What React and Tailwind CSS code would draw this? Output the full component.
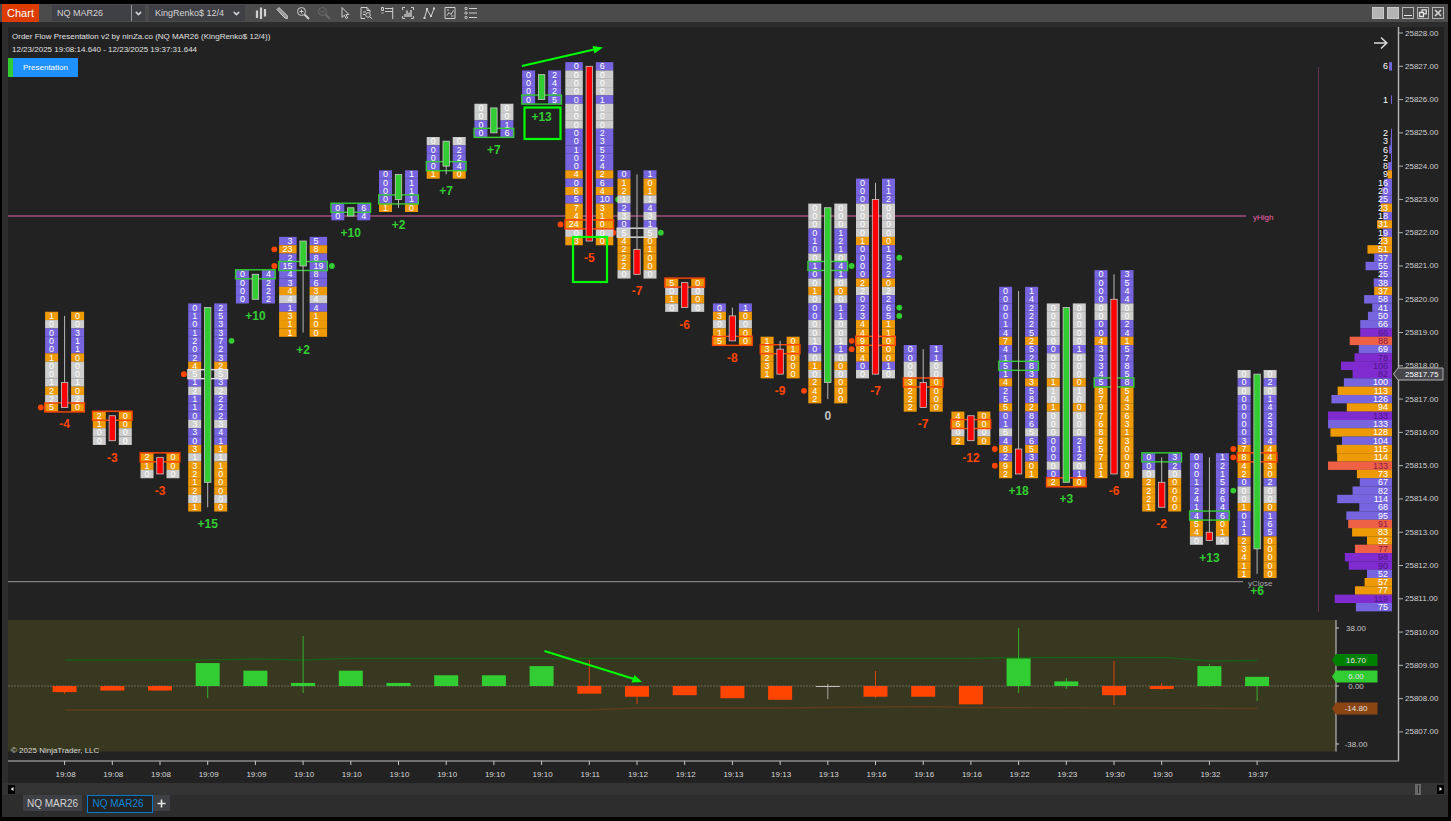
import { ChevronDown, X } from 'lucide-react'

// price ladder: tick 0 is 25827.00, every tick is 0.25 lower
const TICK = 8.32
const tickY = (t) => 66.3 + t * TICK
const barX = (i) => 64.6 + i * 47.7
const deltaY = (v) => 686 - v * 1.53

const GREEN = '#32cd32'
const RED = '#ff4500'
const WHITE = '#e0e0e0'

// top: first tick, bid / ask: one entry per tick, body / wick: tick ranges, box: highlighted tick
// dots: [side, tick, color], osc: delta wick in pixels
const CANDLES = [
  { time: '19:08', delta: -4, top: 30, bid: '1 0 0 0 0 1 0 0 1 2 2 5', ask: '0 0 3 1 1 0 0 0 1 0 2 0', body: [38, 41], wick: [30, 41], box: [41, RED], dots: [[-1, 41, RED]], osc: [686, 694] },
  { time: '19:08', delta: -3, top: 42, bid: '2 1 0 0', ask: '0 0 0 0', body: [42, 45], box: [42, RED] },
  { time: '19:08', delta: -3, top: 47, bid: '2 1 0', ask: '0 0 0', body: [47, 49], box: [47, RED] },
  { time: '19:09', delta: 15, top: 29, bid: '0 1 0 1 2 0 2 4 5 1 2 1 1 0 3 3 0 3 1 3 2 1 2 0 1', ask: '2 5 3 3 7 2 3 2 5 3 2 2 2 2 3 4 1 1 1 1 0 0 0 0 0', body: [29, 50], wick: [29, 53], box: [37, WHITE], dots: [[-1, 37, RED], [1, 33, GREEN]], osc: [686, 698] },
  { time: '19:09', delta: 10, top: 25, bid: '0 0 0 0', ask: '4 2 2 2', body: [25, 28], box: [25, GREEN] },
  { time: '19:10', delta: 2, wide: true, top: 21, bid: '3 23 2 15 4 3 4 4 1 3 1 1', ask: '5 8 8 19 8 6 3 4 4 1 0 0', body: [21, 24], wick: [21, 32], box: [24, GREEN], dots: [[-1, 22, RED], [-1, 24, RED], [1, 24, GREEN]], osc: [636, 693] },
  { time: '19:10', delta: 10, top: 17, bid: '0 0', ask: '6 4', body: [17, 18], box: [17, GREEN] },
  { time: '19:10', delta: 2, top: 13, bid: '0 0 0 0 1', ask: '1 1 1 1 0', body: [13, 16], wick: [13, 17], box: [16, GREEN] },
  { time: '19:10', delta: 7, top: 9, bid: '0 0 0 0 1', ask: '0 2 2 4 0', body: [9, 12], wick: [9, 13], box: [12, GREEN] },
  { time: '19:10', delta: 7, top: 5, bid: '0 0 0 0', ask: '0 0 1 6', body: [5, 8], box: [8, GREEN] },
  { time: '19:10', delta: 13, top: 1, bid: '0 0 0 0', ask: '2 4 2 5', body: [1, 4], box: [4, GREEN] },
  { time: '19:11', delta: -5, wide: true, top: 0, bid: '0 0 0 0 0 0 0 0 0 0 1 0 0 4 0 6 5 7 4 24 0 3', ask: '6 0 0 0 1 0 0 0 2 3 5 2 4 2 6 4 10 3 1 0 0 0', body: [0, 21], box: [19, RED], dots: [[-1, 19, RED], [1, 16, GREEN]], osc: [660, 686] },
  { time: '19:12', delta: -7, top: 13, bid: '0 1 2 1 2 3 0 5 4 2 2 2 0', ask: '1 0 1 1 4 3 1 5 0 1 0 0 0', body: [22, 25], wick: [13, 25], box: [20, WHITE], dots: [[-1, 20, RED], [1, 20, GREEN]], osc: [686, 704] },
  { time: '19:12', delta: -6, top: 26, bid: '5 0 1 0', ask: '0 0 0 0', body: [26, 29], box: [26, RED] },
  { time: '19:13', delta: -8, top: 29, bid: '0 3 0 1 5', ask: '1 0 0 0 0', body: [30, 33], wick: [29, 33], box: [33, RED] },
  { time: '19:13', delta: -9, top: 33, bid: '1 3 2 3 1', ask: '0 1 0 0 0', body: [34, 37], wick: [33, 37], box: [34, RED] },
  { time: '19:13', delta: 0, top: 17, bid: '0 0 0 0 1 0 0 1 0 0 1 0 0 0 0 0 1 0 0 1 0 2 4 2', ask: '0 0 0 1 2 1 0 4 1 0 0 0 1 1 0 0 1 1 0 0 0 0 0 0', body: [17, 38], wick: [17, 40], box: [24, GREEN], dots: [[-1, 39, RED], [1, 24, GREEN]], osc: [684, 699] },
  { time: '19:16', delta: -7, top: 14, bid: '0 0 0 0 0 0 0 1 0 0 0 0 2 2 0 2 3 4 4 9 8 4 0 0', ask: '1 1 2 0 0 0 0 0 1 5 2 2 0 2 2 6 5 1 1 0 0 0 1 0', body: [16, 37], wick: [14, 37], box: [33, RED], dots: [[-1, 33, RED], [-1, 34, RED], [1, 23, GREEN], [1, 29, GREEN], [1, 30, GREEN]], osc: [671, 698] },
  { time: '19:16', delta: -7, top: 34, bid: '0 0 0 0 3 2 2 2', ask: '1 1 0 0 0 0 0 0', body: [38, 41], wick: [34, 41], box: [38, RED] },
  { time: '19:16', delta: -12, top: 42, bid: '4 6 0 2', ask: '0 0 0 0', body: [42, 45], box: [43, RED] },
  { time: '19:22', delta: 18, top: 27, bid: '0 0 0 0 1 4 7 4 1 5 1 4 2 5 5 0 1 5 4 8 2 9 2', ask: '1 4 2 2 2 5 2 5 2 8 3 3 5 8 2 8 6 5 6 5 3 0 1', body: [46, 49], wick: [27, 49], box: [36, GREEN], dots: [[-1, 46, RED], [-1, 48, RED]], osc: [628, 693] },
  { time: '19:23', delta: 3, top: 29, bid: '0 0 0 0 0 0 0 0 0 1 1 0 1 0 0 0 0 0 0 0 0 2', ask: '0 0 0 0 0 1 0 0 0 0 1 0 0 0 0 0 2 1 2 0 1 0', body: [29, 50], box: [50, RED], osc: [678, 689] },
  { time: '19:30', delta: -6, top: 25, bid: '0 0 0 0 0 0 0 0 4 3 3 3 4 5 8 7 9 7 6 8 6 5 7 1 1', ask: '3 5 4 4 0 0 2 4 1 5 7 8 5 8 5 4 3 6 3 1 3 0 0 0 0', body: [28, 49], wick: [25, 49], box: [38, GREEN], osc: [661, 705] },
  { time: '19:30', delta: -2, top: 47, bid: '0 0 0 2 2 2 1', ask: '3 2 0 0 0 0 0', body: [50, 53], wick: [47, 53], box: [47, GREEN], osc: [683, 690] },
  { time: '19:32', delta: 13, top: 47, bid: '0 0 0 1 2 4 1 4 5 4 0', ask: '1 2 1 5 8 6 4 6 0 1 0', body: [56, 57], wick: [47, 57], box: [54, GREEN], osc: [664, 687] },
  { time: '19:37', delta: 6, top: 37, bid: '0 0 0 0 0 0 0 0 3 7 8 4 2 0 0 0 1 0 1 1 2 3 4 1 1', ask: '0 2 0 1 4 2 3 3 4 4 4 3 0 2 0 0 0 1 6 5 0 0 0 0 0', body: [37, 58], wick: [37, 61], box: [47, RED], dots: [[-1, 46, RED], [-1, 47, RED], [-1, 51, GREEN]], osc: [686, 701] },
]

// candles that closed up
const UP = [3, 4, 5, 6, 7, 8, 9, 10, 16, 21, 25]

// volume profile from tick 8 down; the letter picks the bar color
const PROFILE =
  '2 3 6 2 8 9o 16 20 25 23o 18 31o 19 23o 51o 37 55 25 38 37o 58 41 50 66 66p 88r 69 78p 106p 82p 100 113o 126 94o 133p 133 128o 104 115o 114o 133r 73o 67 82 114 68 95 91r 83o 52o 77r 98p 90p 52 57o 77o 119p 75'
const VOLUME = [
  { tick: 0, value: 6, kind: 'v' },
  { tick: 4, value: 1, kind: 'v' },
  ...PROFILE.split(' ').map((s, i) => ({
    tick: 8 + i,
    value: parseInt(s, 10),
    kind: /[a-z]$/.test(s) ? s.slice(-1) : 'v',
  })),
]
const BAR_FILL = { v: '#7665df', o: '#ee9a06', p: '#802bd0', r: '#ef6145' }
const BAR_TEXT = { v: '#ffffff', o: '#ffffff', p: '#4c1688', r: '#8b1a4e' }

const cellFill = (bid, ask) => (bid > ask ? '#ee9a06' : ask > bid ? '#7665df' : '#cdcdcd')

function Footprint({ candle, index }) {
  const x = barX(index)
  const outer = candle.wide ? 24 : 19.5
  const width = candle.wide ? 17.5 : 13
  const bids = candle.bid.split(' ').map(Number)
  const asks = candle.ask.split(' ').map(Number)
  const last = candle.top + bids.length - 1
  const up = UP.includes(index)
  const labelColor = candle.delta > 0 ? GREEN : candle.delta < 0 ? RED : '#c0c0c0'
  return (
    <g>
      {bids.map((bid, r) => {
        const y = tickY(candle.top + r)
        const fill = cellFill(bid, asks[r])
        return (
          <g key={r}>
            <rect x={x - outer} y={y - TICK / 2} width={width} height={TICK + 0.1} fill={fill} />
            <rect x={x + outer - width} y={y - TICK / 2} width={width} height={TICK + 0.1} fill={fill} />
          </g>
        )
      })}
      <g className="fill-white text-[9px]" dominantBaseline="central">
        {bids.map((bid, r) => (
          <text key={r} x={x - 10.5} y={tickY(candle.top + r)} textAnchor="end">{bid}</text>
        ))}
        {asks.map((ask, r) => (
          <text key={r} x={x + 10.5} y={tickY(candle.top + r)}>{ask}</text>
        ))}
      </g>
      <rect x={x - outer - 0.3} y={tickY(candle.box[0]) - 4.5} width={outer * 2 + 0.6} height={9} fill="none" stroke={candle.box[1]} strokeWidth="1.4" />
      {candle.wick && (
        <line x1={x} x2={x} y1={tickY(candle.wick[0])} y2={tickY(candle.wick[1])} stroke="#b8b8b8" />
      )}
      <rect
        x={x - 3.2}
        y={tickY(candle.body[0])}
        width={6.4}
        height={(candle.body[1] - candle.body[0]) * TICK}
        fill={up ? GREEN : '#ff0000'}
        stroke="#c8c8c8"
        strokeWidth="0.8"
      />
      <text x={x} y={tickY(last) + 17} textAnchor="middle" dominantBaseline="central" className="text-[12px] font-bold" fill={labelColor}>
        {candle.delta > 0 ? `+${candle.delta}` : candle.delta}
      </text>
    </g>
  )
}

function DeltaPanel() {
  return (
    <g>
      <rect x="8" y="620" width="1328" height="131.5" fill="#38371f" />
      <line x1="8" x2="1336" y1="686" y2="686" stroke="#6c6b5a" strokeDasharray="2 1" />
      <polyline points="65,660 208,660 255,659 302,660 350,658.5 970,658.5 1019,657.5 1165,657.5 1209,661 1257,660.5" fill="none" stroke="#1d5c16" strokeWidth="1.4" />
      <polyline points="65,710 590,710 637,708 780,708 924,706.5 971,707.5 1257,708.5" fill="none" stroke="#5f3c1b" strokeWidth="1.4" />
      {CANDLES.map((c, i) => {
        const x = barX(i)
        const color = c.delta > 0 ? GREEN : c.delta < 0 ? RED : '#c0c0c0'
        const y = Math.min(deltaY(c.delta), 686)
        return (
          <g key={i}>
            {c.osc && <line x1={x} x2={x} y1={c.osc[0]} y2={c.osc[1]} stroke={color} strokeOpacity="0.8" />}
            <rect x={x - 12} y={y} width="24" height={Math.max(Math.abs(deltaY(c.delta) - 686), 1)} fill={color} />
          </g>
        )
      })}
      <line x1="1336" x2="1336" y1="620" y2="751.5" stroke="#d0d0d0" />
      {[['38.00', 628], ['0.00', 686], ['-38.00', 744]].map(([label, y]) => (
        <g key={label}>
          <line x1="1336" x2="1339" y1={y} y2={y} stroke="#d0d0d0" />
          <text x="1356" y={y} textAnchor="middle" dominantBaseline="central" className="fill-[#c8c8c8] text-[8px]">{label}</text>
        </g>
      ))}
      {[['16.70', 660, '#008000'], ['6.00', 676.5, '#32cd32'], ['-14.80', 708.5, '#8b4513']].map(([label, y, fill]) => (
        <g key={label}>
          <path d={`M1332 ${y} L1336 ${y - 6} H1377.5 V${y + 6} H1336 Z`} fill={fill} />
          <text x="1356" y={y} textAnchor="middle" dominantBaseline="central" className="fill-[#e0e0e0] text-[8px]">{label}</text>
        </g>
      ))}
    </g>
  )
}

function PriceAxis() {
  const prices = Array.from({ length: 22 }, (_, i) => 25828 - i)
  return (
    <g>
      <line x1="1398.5" x2="1398.5" y1="27" y2="761" stroke="#b8b8b8" strokeWidth="1.4" />
      {prices.map((p, i) => (
        <g key={p}>
          <line x1="1399" x2="1403" y1={tickY(i * 4 - 4)} y2={tickY(i * 4 - 4)} stroke="#b0b0b0" />
          <text x="1405" y={tickY(i * 4 - 4)} dominantBaseline="central" className="fill-[#d0d0d0] text-[8px]">{p}.00</text>
        </g>
      ))}
      <path d="M1393.5 374 L1398 368 H1443 V380 H1398 Z" fill="#47474b" stroke="#b4b4b4" />
      <text x="1405" y="374.2" dominantBaseline="central" className="fill-white text-[8px]">25817.75</text>
    </g>
  )
}

function TimeAxis() {
  return (
    <g>
      <line x1="8" x2="1399" y1="761" y2="761" stroke="#8c8c8c" strokeWidth="1.4" />
      {CANDLES.map((c, i) => (
        <g key={i}>
          <line x1={barX(i)} x2={barX(i)} y1="761" y2="765" stroke="#c8c8c8" />
          <text x={barX(i) + 1} y="774" textAnchor="middle" dominantBaseline="central" className="fill-[#d8d8d8] text-[8px]">{c.time}</text>
        </g>
      ))}
    </g>
  )
}

function VolumeProfile() {
  return (
    <g>
      {VOLUME.map((v) => {
        const w = Math.max(v.value * 0.481, 1)
        return <rect key={v.tick} x={1392 - w} y={tickY(v.tick) - TICK / 2} width={w} height={TICK + 0.1} fill={BAR_FILL[v.kind]} />
      })}
      {VOLUME.map((v) => (
        <text key={v.tick} x="1388" y={tickY(v.tick)} textAnchor="end" dominantBaseline="central" fill={BAR_TEXT[v.kind]} className="text-[9px]">{v.value}</text>
      ))}
    </g>
  )
}

function Chart() {
  return (
    <svg viewBox="8 27 1436 756" className="block h-auto w-full bg-[#222222]" role="img" aria-label="Order flow chart">
      <line x1="8" x2="1246" y1="216" y2="216" stroke="#a04f7b" strokeWidth="1.4" />
      <text x="1253" y="217" dominantBaseline="central" className="fill-[#f065ad] text-[8px]">yHigh</text>
      <line x1="8" x2="1243" y1="581.7" y2="581.7" stroke="#9a9a9a" />
      <line x1="1318.5" x2="1318.5" y1="67" y2="612" stroke="#663351" />

      {CANDLES.map((c, i) =>
        (c.dots || []).map(([side, tick, color]) => (
          <circle key={`${i}-${side}-${tick}`} cx={barX(i) + side * (c.wide ? 28.8 : 23.8)} cy={tickY(tick)} r="2.9" fill={color} />
        ))
      )}
      {CANDLES.map((c, i) => <Footprint key={i} candle={c} index={i} />)}
      <text x="1248" y="583" dominantBaseline="central" className="fill-[#a8a8a8] text-[8px]">yClose</text>

      <VolumeProfile />
      <DeltaPanel />
      <PriceAxis />
      <TimeAxis />

      {/* annotations */}
      <g fill="none" stroke="#00ff00" strokeWidth="2.2">
        <rect x="524.5" y="107.5" width="36" height="31.5" />
        <rect x="573" y="237" width="34" height="45" />
        <path d="M522 66 L594 49.5" />
        <path d="M544.5 651 L634 679" />
      </g>
      <path d="M603 47.5 L592.5 46 L594.5 53.5 Z M642 682 L634.5 675 L631.5 682.5 Z" fill="#00ff00" />

      <path d="M1374 43 H1386.5 M1381 37.5 L1386.8 43 L1381 48.5" fill="none" stroke="#d8d8d8" strokeWidth="1.6" />
    </svg>
  )
}

const TOOLS = [
  { label: 'Chart style', art: <g strokeWidth="2.2"><path d="M3 4.5v7.5M7 1.5v11.5M11 3v7.5" /></g> },
  { label: 'Drawing tools', art: <><path d="M2 3.5 L4 1.5 L12 9.5 L12.5 12.5 L9.8 12 Z" fill="currentColor" fillOpacity="0.6" /></> },
  { label: 'Zoom in', art: <><circle cx="5.5" cy="5.5" r="4" /><path d="M3.5 5.5h4M5.5 3.5v4" /><path d="M8.5 8.5l4.5 4.5" strokeWidth="2" /></> },
  { label: 'Zoom out', dim: true, art: <><circle cx="5.5" cy="5.5" r="4" /><path d="M3.5 5.5h4" /><path d="M8.5 8.5l4.5 4.5" strokeWidth="2" /></> },
  { label: 'Cursor', art: <path d="M4 1.5v10l2.4-2.3 1.8 3.5 1.5-.8-1.8-3.3H11Z" /> },
  { label: 'Data series', art: <><path d="M6 12.5H2V1.5h6l3 3v2M8 1.5v3h3M4 6h3M4 8.5h2" /><circle cx="9" cy="9" r="2.3" /><path d="M10.8 10.8l2.4 2" /></> },
  { label: 'Chart trader', art: <><path d="M1.5 1.5h2v3h-2zM1.5 7h2M5 2.5h8M12.7 1.5v11.5M5 5.5h7.5" /></> },
  { label: 'Indicators', art: <><path d="M1.5 4V1.5H4M10 1.5h2.5V4M1.5 10v2.5H4M10 12.5h2.5V10" /><path d="M4 11V8M6 11V4.5M8 11V6.5M10 11V4" strokeWidth="1.4" /></> },
  { label: 'Strategies', art: <><path d="M2.5 11.5L5 3.5l4 7 3-8" /><path d="M1.5 11h2v2h-2zM4 2h2v2H4zM8 9h2v2H8zM11 1.5h2v2h-2z" fill="currentColor" stroke="none" /></> },
  { label: 'Snapshot', art: <><path d="M2 1.5h10v11H2z" /><path d="M4 9.5l2-3 2 2 2.5-4M4 4h2M8 10h2.5" /></> },
  { label: 'Properties', art: <><path d="M5 2.5h8M5 7h8M5 11.5h8" /><path d="M1 1.5h2v2H1zM1 6h2v2H1zM1 10.5h2v2H1z" strokeWidth="0.8" /></> },
]

function Toolbar() {
  return (
    <header className="flex h-[18px] items-center bg-[#4b4b4b] pr-1 pl-[2px] text-[#d4d4d4]">
      <div className="flex h-full w-[37px] items-center justify-center bg-[#dc3c00] text-[11px] text-white">Chart</div>
      <div className="relative ml-[13px] h-4 w-[93px] bg-[#3f3f46]">
        <select aria-label="Instrument" className="block h-full w-full appearance-none pl-[5px] text-[9px] leading-4 outline-none">
          <option>NQ MAR26</option>
        </select>
        <div className="pointer-events-none absolute inset-y-0 right-0 flex w-[14px] items-center justify-center border-l border-[#999999]">
          <ChevronDown size={9} strokeWidth={4} />
        </div>
      </div>
      <div className="relative ml-1 h-4 w-[96px] bg-[#3f3f46]">
        <select aria-label="Interval" className="block h-full w-full appearance-none pl-[6px] text-[9px] leading-4 outline-none">
          <option>KingRenko$ 12/4</option>
        </select>
        <ChevronDown size={9} strokeWidth={4} className="pointer-events-none absolute top-1 right-1" />
      </div>
      <div className="ml-[9px] flex items-center gap-[7px]">
        {TOOLS.map((t) => (
          <button key={t.label} aria-label={t.label} className={t.dim ? 'text-[#6a6a6a]' : 'text-[#cfcfcf]'}>
            <svg viewBox="0 0 14 14" width="14" height="14" fill="none" stroke="currentColor">{t.art}</svg>
          </button>
        ))}
      </div>
      <div className="ml-auto flex items-center gap-[3px]">
        <button aria-label="Link instrument" className="h-3 w-3 border border-[#c8c8c8] bg-[#b4b4b4]" />
        <button aria-label="Link interval" className="h-3 w-3 border border-[#c8c8c8] bg-[#b4b4b4]" />
        <button aria-label="Minimize" className="flex h-3 w-3 items-end justify-center border border-[#b4b4b4] pb-[2px]">
          <span className="h-px w-2 bg-[#e4e4e4]" />
        </button>
        <button aria-label="Restore" className="flex h-3 w-3 items-center justify-center border border-[#b4b4b4]">
          <svg viewBox="0 0 10 10" width="10" height="10" fill="none" stroke="#e4e4e4" strokeWidth="1.3">
            <path d="M1.5 4.5h4v4h-4zM4 4.5V1.8h4.2v4H5.5" />
          </svg>
        </button>
        <button aria-label="Close" className="flex h-3 w-3 items-center justify-center border border-[#b4b4b4]">
          <X size={10} strokeWidth={4} />
        </button>
      </div>
    </header>
  )
}

export default function App() {
  return (
    <div className="min-h-screen bg-black pt-1 pr-[3px] pb-1 font-['Liberation_Sans',Arial,sans-serif]">
      <Toolbar />
      <div className="border-l-2 border-black bg-[#2d2d2e]">
        <main className="relative pt-[5px] pr-1 pl-[6px]">
          <Chart />
          <div className="absolute top-2 left-[6px] text-[8px] text-[#e0e0e0]">
            <p className="pl-1 leading-[13px]">Order Flow Presentation v2 by ninZa.co (NQ MAR26 (KingRenko$ 12/4))</p>
            <p className="pl-1 leading-[13px]">12/23/2025 19:08:14.640 - 12/23/2025 19:37:31.644</p>
            <button className="mt-[2px] h-[19px] w-[70px] border-l-[5px] border-[#32cd32] bg-[#1e90ff] text-[8px] text-white">Presentation</button>
          </div>
          <p className="absolute bottom-[26px] left-[9px] text-[8px] leading-[12px] text-[#d8d8d8]">© 2025 NinjaTrader, LLC</p>
        </main>
        <div className="flex h-3 items-center justify-between bg-[#333333] pr-1 pl-[6px]">
          <button aria-label="Scroll left" className="flex h-[9px] w-[7px] items-center justify-center bg-black">
            <svg viewBox="0 0 4 6" width="4" height="6"><path d="M3.5 1v4L.8 3z" fill="#ffffff" /></svg>
          </button>
          <div className="flex items-center gap-4">
            <div className="flex h-[11px] w-[6px] items-center justify-center bg-[#686868]"><span className="h-2 w-px bg-[#2d2d2d]" /></div>
            <button aria-label="Scroll right" className="flex h-[9px] w-[7px] items-center justify-center bg-black">
              <svg viewBox="0 0 4 6" width="4" height="6"><path d="M.5 1v4l2.7-2z" fill="#ffffff" /></svg>
            </button>
          </div>
        </div>
        <nav className="flex h-[22px] items-start pl-[21px] text-[10px]">
          <button className="h-4 w-[59px] bg-[#3f3f46] text-[#d4d4d4]">NQ MAR26</button>
          <button className="ml-[5px] h-[18px] w-[66px] border border-[#007acc] bg-[#222222] pr-1 pb-[2px] text-[#0c85d6]">NQ MAR26</button>
          <button aria-label="New tab" className="flex h-4 w-[17px] items-center justify-center bg-[#3f3f46]">
            <svg viewBox="0 0 9 9" width="9" height="9" stroke="#e4e4e4" strokeWidth="1.6"><path d="M4.5 0.5v8M0.5 4.5h8" /></svg>
          </button>
        </nav>
      </div>
    </div>
  )
}
